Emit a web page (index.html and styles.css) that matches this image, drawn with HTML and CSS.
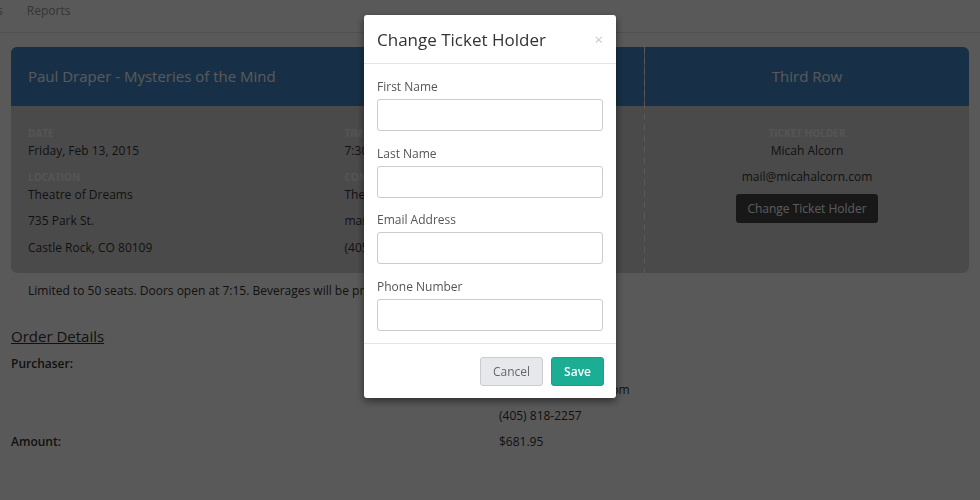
FILE: index.html
```html
<!DOCTYPE html>
<html lang="en">
<head>
  <meta charset="utf-8">
  <title>Order - Paul Draper</title>
  <link rel="stylesheet" href="styles.css">
</head>
<body>
  <div class="topnav">
    <ul class="navlist">
      <li>Events</li>
      <li>Reports</li>
    </ul>
  </div>

  <div class="page">
    <div class="ticket">
      <div class="ticket-main">
        <div class="ticket-head">
          <h3>Paul Draper - Mysteries of the Mind</h3>
        </div>
        <div class="ticket-body cols">
          <div class="col">
            <div class="lbl">Date</div>
            <p>Friday, Feb 13, 2015</p>
            <div class="lbl">Location</div>
            <p>Theatre of Dreams</p>
            <p>735 Park St.</p>
            <p>Castle Rock, CO 80109</p>
          </div>
          <div class="col">
            <div class="lbl">Time</div>
            <p>7:30 PM</p>
            <div class="lbl">Contact</div>
            <p>The Magic Society</p>
            <p>marcus@magicsociety.com</p>
            <p>(405) 555-0192</p>
          </div>
        </div>
      </div>
      <div class="ticket-stub">
        <div class="ticket-head center">
          <h3>Third Row</h3>
        </div>
        <div class="ticket-body center">
          <div class="lbl">Ticket Holder</div>
          <p>Micah Alcorn</p>
          <p class="last">mail@micahalcorn.com</p>
          <button type="button" class="btn-dark">Change Ticket Holder</button>
        </div>
      </div>
    </div>

    <p class="note">Limited to 50 seats. Doors open at 7:15. Beverages will be provided during the intermission.</p>

    <h4 class="section-title">Order Details</h4>
    <div class="order-row">
      <div class="order-key">Purchaser:</div>
      <div class="order-val">
        <p>Micah Alcorn</p>
        <p>mail@micahalcorn.com</p>
        <p>(405) 818-2257</p>
      </div>
    </div>
    <div class="order-row">
      <div class="order-key">Amount:</div>
      <div class="order-val"><p>$681.95</p></div>
    </div>
  </div>

  <div class="backdrop"></div>

  <div class="modal">
    <div class="modal-head">
      <h4>Change Ticket Holder</h4>
      <span class="close">&times;</span>
    </div>
    <div class="modal-body">
      <label for="first">First Name</label>
      <input type="text" id="first">
      <label for="last">Last Name</label>
      <input type="text" id="last">
      <label for="email">Email Address</label>
      <input type="text" id="email">
      <label for="phone">Phone Number</label>
      <input type="text" id="phone">
    </div>
    <div class="modal-foot">
      <button type="button" class="btn-cancel">Cancel</button>
      <button type="button" class="btn-save">Save</button>
    </div>
  </div>
</body>
</html>
```

FILE: styles.css
```css
body{
  margin:0;
  background-color:#fff;
  font-family:"Open Sans", "Liberation Sans", sans-serif;
  font-size:12px;
  color:#333;
}
p{
  margin:0;
}
.topnav{
  height:32px;
  border-bottom:1px solid #e7e7e7;
  overflow:hidden;
}
.navlist{
  list-style:none;
  display:flex;
  margin:0 0 0 -46px;
  padding:0;
}
.navlist li{
  line-height:22px;
  padding:0 12px;
  color:#999;
}
.page{
  padding:14px 11px 0 11px;
}
.ticket{
  display:flex;
  border-radius:6px;
  overflow:hidden;
  background-color:#d5d5d5;
}
.ticket-main{
  flex:0 0 633px;
}
.ticket-stub{
  flex:1;
  border-left:1px solid #fff;
  border-image:repeating-linear-gradient(to bottom, #fff 0 7px, transparent 7px 11px) 1;
}
.ticket-head{
  background-color:#428bca;
  height:59px;
  display:flex;
  align-items:center;
  padding:0 17px;
}
.ticket-head h3{
  margin:0 0 2px 0;
  font-weight:normal;
  font-size:15px;
  color:#fff;
}
.ticket-head.center{
  justify-content:center;
}
.ticket-body{
  height:167px;
  box-sizing:border-box;
  padding-top:20px;
}
.ticket-body.cols{
  display:grid;
  grid-template-columns:1fr 1fr;
}
.col{
  padding-left:17px;
}
.ticket-body.center{
  text-align:center;
}
.lbl{
  font-size:10px;
  font-weight:bold;
  text-transform:uppercase;
  color:#f2f2f2;
  line-height:14px;
  margin-bottom:1.5px;
}
.ticket-body p{
  line-height:18px;
  margin-bottom:8.5px;
}
.ticket-body p + .lbl{
  margin-top:10.5px;
}
.ticket-body p.last{
  margin-bottom:8px;
}
.btn-dark{
  font-family:inherit;
  font-size:12px;
  color:#fff;
  background-color:#474747;
  border:none;
  border-radius:3px;
  height:29px;
  padding:0 11.5px;
}
.note{
  padding:9px 17px;
  line-height:18px;
}
.section-title{
  margin:17px 0 9px 0;
  font-size:15px;
  font-weight:normal;
  text-decoration:underline;
}
.order-row{
  display:flex;
}
.order-key{
  width:488px;
  font-weight:600;
  line-height:18px;
}
.order-val p{
  line-height:18px;
  margin-bottom:8px;
}
.backdrop{
  position:fixed;
  top:0;
  left:0;
  right:0;
  bottom:0;
  background-color:rgba(0,0,0,0.65);
}
.modal{
  position:fixed;
  top:15px;
  left:364px;
  width:252px;
  background-color:#fff;
  border-radius:3px;
  box-shadow:0 3px 9px rgba(0,0,0,0.5);
}
.modal-head{
  height:49px;
  box-sizing:border-box;
  border-bottom:1px solid #e5e5e5;
  display:flex;
  align-items:center;
  justify-content:space-between;
  padding:0 13px;
}
.modal-head h4{
  margin:0;
  font-size:17px;
  font-weight:normal;
  color:#333;
}
.close{
  color:#c8c8c8;
  font-size:15px;
}
.modal-body{
  padding:14px 13px 12px 13px;
  display:flex;
  flex-direction:column;
}
.modal-body label{
  color:#555;
  line-height:17px;
  margin-bottom:4px;
}
.modal-body input{
  height:32px;
  box-sizing:border-box;
  border:1px solid #ccc;
  border-radius:3px;
  margin-bottom:13.5px;
}
.modal-body input:last-child{
  margin-bottom:0;
}
.modal-foot{
  border-top:1px solid #e5e5e5;
  padding:13px 12px 12px 13px;
  display:flex;
  justify-content:flex-end;
  gap:8px;
}
.modal-foot button{
  font-family:inherit;
  font-size:12px;
  height:29px;
  border-radius:3px;
  padding:0 12px;
}
.btn-cancel{
  background-color:#e6e8eb;
  border:1px solid #c9ccd0;
  color:#666;
}
.btn-save{
  background-color:#1bae95;
  border:1px solid #179f88;
  color:#fff;
  font-weight:600;
}
```
